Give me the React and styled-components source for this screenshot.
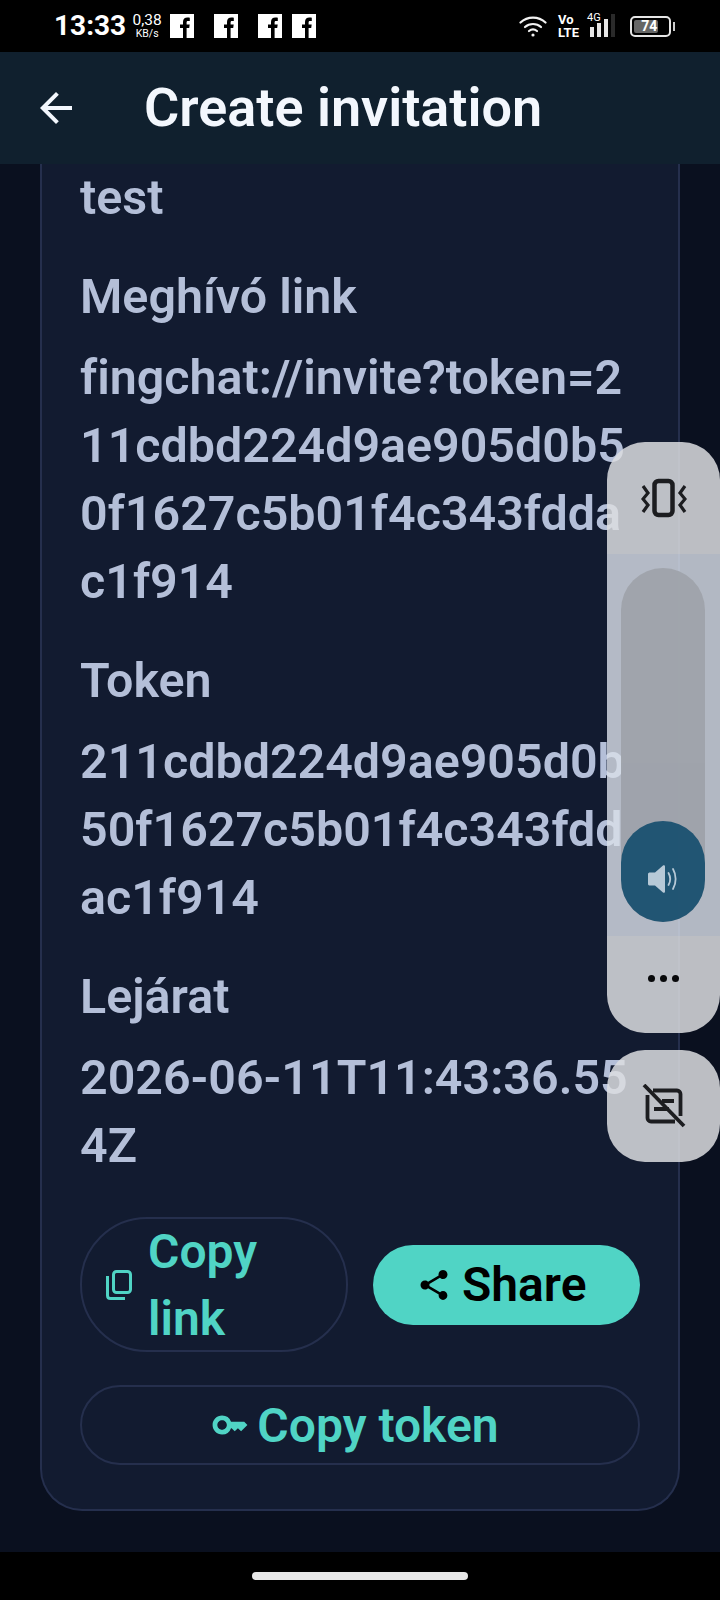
import React from "react";
import styled, { createGlobalStyle } from "styled-components";
import { MdArrowBack, MdShare, MdOutlineKey } from "react-icons/md";

const GlobalStyle = createGlobalStyle`
  html, body {
    margin: 0;
    padding: 0;
    background: #000;
  }
  * {
    box-sizing: border-box;
  }
`;

const Screen = styled.div`
  position: relative;
  width: 720px;
  height: 1600px;
  overflow: hidden;
  display: flex;
  flex-direction: column;
  background: #0a101f;
  font-family: Roboto, "Liberation Sans", sans-serif;
  font-variant-ligatures: none;
`;

const StatusBar = styled.div`
  height: 52px;
  flex: none;
  background: #000;
  color: #fff;
  display: flex;
  align-items: center;
  justify-content: space-between;
  padding: 0 49px 0 54px;
`;

const StatusGroup = styled.div`
  display: flex;
  align-items: center;
`;

const Clock = styled.span`
  font-size: 28px;
  font-weight: 700;
  line-height: 52px;
`;

const Speed = styled.div`
  margin-left: 5px;
  width: 32px;
  display: flex;
  flex-direction: column;
  align-items: center;
  font-size: 15.5px;
  line-height: 15px;
  & > small {
    font-size: 10.5px;
    line-height: 12px;
  }
`;

const FbIcon = styled.svg`
  width: 24px;
  height: 24px;
  margin-left: ${(props) => props.$gap}px;
`;

const Volte = styled.div`
  margin-left: 11px;
  display: flex;
  flex-direction: column;
  align-items: flex-start;
  font-size: 13px;
  font-weight: 700;
  line-height: 13px;
`;

const Signal = styled.div`
  position: relative;
  margin-left: 9px;
  width: 28px;
  height: 24px;
  & > span {
    position: absolute;
    left: -1px;
    top: -2px;
    font-size: 11px;
    line-height: 12px;
  }
`;

const Battery = styled.div`
  position: relative;
  margin-left: 14px;
  width: 41px;
  height: 21px;
  border: 2px solid #e6e6e6;
  border-radius: 5px;
  padding: 2px;
  &::after {
    content: "";
    position: absolute;
    right: -6px;
    top: 4px;
    width: 2.5px;
    height: 9px;
    background: #ccc;
  }
`;

const BatteryFill = styled.div`
  height: 100%;
  border-radius: 2px;
  background: #666;
  color: #fff;
  font-size: 14px;
  font-weight: 700;
  line-height: 13px;
  text-align: right;
  padding-right: 1px;
`;

const AppBar = styled.header`
  height: 112px;
  flex: none;
  display: flex;
  align-items: center;
  background: #10202e;
  color: #f3f7fd;
  padding-left: 32px;
  & > svg {
    flex: none;
  }
`;

const Title = styled.h1`
  margin: 0 0 0 64px;
  font-size: 54px;
  font-weight: 600;
  line-height: 60px;
  white-space: nowrap;
`;

const Content = styled.main`
  flex: 1;
  min-height: 0;
  padding: 0 40px 41px;
  display: flex;
`;

const Card = styled.section`
  width: 100%;
  background: #121b30;
  border: 2px solid #252f4d;
  border-top: 0;
  border-radius: 0 0 42px 42px;
  padding: 0 38px 46px;
  display: flex;
  flex-direction: column;
`;

const Field = styled.div`
  margin-bottom: 37px;
  color: #b4bfd8;
  font-weight: 600;
  font-size: 48.4px;
  &:last-of-type {
    margin-bottom: 34px;
  }
`;

const Label = styled.div`
  line-height: 56px;
  margin-bottom: 19px;
`;

const Value = styled.div`
  line-height: 68px;
  width: 560px;
  word-break: break-all;
`;

const ButtonRow = styled.div`
  display: grid;
  grid-template-columns: 1fr 1fr;
  gap: 25px;
  align-items: center;
  margin-bottom: 33px;
`;

const Button = styled.button`
  display: flex;
  align-items: center;
  justify-content: ${(props) => (props.$start ? "flex-start" : "center")};
  gap: ${(props) => props.$gap || 8}px;
  width: 100%;
  min-height: 80px;
  padding: 0 34px 0 24px;
  border-radius: 67px;
  font-family: inherit;
  font-size: 48px;
  font-weight: 600;
  line-height: 67px;
  text-align: left;
  color: ${(props) => (props.$filled ? "#000" : "#50d4c5")};
  background: ${(props) => (props.$filled ? "#50d4c5" : "transparent")};
  border: ${(props) => (props.$filled ? "0" : "2px solid #252f4d")};
  & > svg {
    flex: none;
  }
`;

const WrapLabel = styled.span`
  flex: 1;
  min-width: 0;
  margin: -1.5px 0;
`;

const VolumePanel = styled.aside`
  position: absolute;
  left: 607px;
  top: 442px;
  width: 113px;
  border-radius: 38px;
  overflow: hidden;
  display: flex;
  flex-direction: column;
`;

const PanelButton = styled.div`
  height: ${(props) => props.$height}px;
  padding-bottom: ${(props) => props.$lift || 0}px;
  display: flex;
  align-items: center;
  justify-content: center;
  background: rgba(220, 221, 224, 0.85);
  color: #1c1d20;
`;

const SliderZone = styled.div`
  position: relative;
  height: 382px;
  padding: 14px 1px 0 0;
  display: flex;
  justify-content: center;
  background: rgba(216, 222, 232, 0.82);
`;

const SliderTrack = styled.div`
  width: 84px;
  height: 354px;
  border-radius: 42px;
  background: #9fa3ab;
  opacity: 0.96;
  display: flex;
  align-items: flex-end;
`;

const SliderThumb = styled.div`
  width: 84px;
  height: 101px;
  border-radius: 42px;
  background: #1c5170;
  display: flex;
  align-items: center;
  justify-content: center;
  padding-top: 15px;
`;

const Dots = styled.div`
  display: flex;
  gap: 5px;
  & > i {
    width: 7px;
    height: 7px;
    border-radius: 50%;
    background: #08090b;
  }
`;

const CaptionButton = styled.aside`
  position: absolute;
  left: 607px;
  top: 1050px;
  width: 113px;
  height: 112px;
  border-radius: 38px;
  display: flex;
  align-items: center;
  justify-content: center;
  background: rgba(220, 221, 224, 0.85);
  color: #1c1d20;
`;

const NavBar = styled.footer`
  height: 48px;
  flex: none;
  background: #000;
  display: flex;
  justify-content: center;
  padding-top: 20px;
`;

const HomePill = styled.div`
  width: 216px;
  height: 8px;
  border-radius: 4px;
  background: #e8e8e8;
`;

const Facebook = ({ gap }) => (
  <FbIcon $gap={gap} viewBox="0 0 24 24">
    <rect width="24" height="24" fill="#fff" />
    <path
      d="M13 24V14H10V10.5H13V8C13 5 14.8 3.6 17.4 3.6C18.6 3.6 19.4 3.7 19.8 3.8V7H18C16.8 7 16.6 7.6 16.6 8.5V10.5H19.7L19.2 14H16.6V24Z"
      fill="#000"
    />
  </FbIcon>
);

const Wifi = () => (
  <svg width="28" height="22" viewBox="0 0 28 22" fill="none" stroke="#f2f2f2" strokeWidth="2.2" strokeLinecap="round">
    <path d="M1.5 7.5C8.5 1 19.5 1 26.5 7.5" />
    <path d="M6 12C10.5 8 17.5 8 22 12" />
    <path d="M10 16C12.5 14 15.5 14 18 16" />
    <circle cx="14" cy="20" r="1.6" fill="#f2f2f2" stroke="none" />
  </svg>
);

const Bars = () => (
  <svg width="28" height="24" viewBox="0 0 28 24" style={{ position: "absolute", left: 2, top: 0 }}>
    <rect x="0" y="13" width="4" height="10" fill="#e6e6e6" />
    <rect x="7" y="9" width="4" height="14" fill="#e6e6e6" />
    <rect x="14" y="5" width="4" height="18" fill="#e6e6e6" />
    <rect x="21" y="0" width="4" height="23" fill="#2a2a2a" />
  </svg>
);

const Speaker = () => (
  <svg width="32" height="30" viewBox="0 0 32 30" fill="none">
    <path d="M1 10C1 9 2 8.500 3 8.500H8L16 1.500C17 0.800 18 1.500 18 2.500V27.500C18 28.500 17 29.200 16 28.500L8 21.500H3C2 21.500 1 21 1 20Z" fill="#b8cad8" />
    <path d="M21.500 9C23.500 12.500 23.500 17.500 21.500 21" stroke="#b8cad8" strokeWidth="1.800" strokeLinecap="round" />
    <path d="M26 5C29.500 11 29.500 19 26 25" stroke="#b8cad8" strokeWidth="1.800" strokeLinecap="round" />
  </svg>
);

const VibratePhone = () => (
  <svg width="46" height="40" viewBox="0 0 46 40" fill="none" stroke="#1c1d20">
    <rect x="13.500" y="3" width="18" height="34" rx="4" strokeWidth="4.500" />
    <path d="M2 8L7 15L2 21L7 27L2 34" strokeWidth="3.200" />
    <path d="M44 8L39 15L44 21L39 27L44 34" strokeWidth="3.200" />
  </svg>
);

const CaptionsOff = () => (
  <svg width="44" height="44" viewBox="0 0 44 44" fill="none" stroke="#1c1d20" strokeWidth="3.800">
    <path d="M11 6.500H35C37 6.500 38.500 8 38.500 10V32M33 37.500H9C7 37.500 5.500 36 5.500 34V11" />
    <path d="M20 17H32M12 25H27" />
    <path d="M2 1L42 42" />
  </svg>
);

const CopyIcon = () => (
  <svg width="26" height="30" viewBox="0 0 26 30" fill="none" stroke="#50d4c5" strokeWidth="3">
    <rect x="7.500" y="1.500" width="17" height="21" rx="3" />
    <path d="M1.500 6V25.500C1.500 27.500 2.500 28.500 4.500 28.500H19" />
  </svg>
);

const fields = [
  { value: "test" },
  { label: "Meghívó link", value: "fingchat://invite?token=211cdbd224d9ae905d0b50f1627c5b01f4c343fddac1f914" },
  { label: "Token", value: "211cdbd224d9ae905d0b50f1627c5b01f4c343fddac1f914" },
  { label: "Lejárat", value: "2026-06-11T11:43:36.554Z" },
];

const App = () => {
  return (
    <Screen>
      <GlobalStyle />
      <StatusBar>
        <StatusGroup>
          <Clock>13:33</Clock>
          <Speed>
            0,38
            <small>KB/s</small>
          </Speed>
          <Facebook gap={7} />
          <Facebook gap={20} />
          <Facebook gap={20} />
          <Facebook gap={10} />
        </StatusGroup>
        <StatusGroup>
          <Wifi />
          <Volte>
            <span>Vo</span>
            <span>LTE</span>
          </Volte>
          <Signal>
            <span>4G</span>
            <Bars />
          </Signal>
          <Battery>
            <BatteryFill style={{ width: "74%" }}>74</BatteryFill>
          </Battery>
        </StatusGroup>
      </StatusBar>

      <AppBar>
        <MdArrowBack size={48} />
        <Title>Create invitation</Title>
      </AppBar>

      <Content>
        <Card>
          {fields.map((f) => (
            <Field key={f.value}>
              {f.label && <Label>{f.label}</Label>}
              <Value>{f.value}</Value>
            </Field>
          ))}
          <ButtonRow>
            <Button $start $gap={16}>
              <CopyIcon />
              <WrapLabel>Copy link</WrapLabel>
            </Button>
            <Button $filled $gap={10}>
              <MdShare size={36} />
              Share
            </Button>
          </ButtonRow>
          <Button $gap={8}>
            <MdOutlineKey size={38} />
            Copy token
          </Button>
        </Card>
      </Content>

      <NavBar>
        <HomePill />
      </NavBar>

      <VolumePanel>
        <PanelButton $height={112}>
          <VibratePhone />
        </PanelButton>
        <SliderZone>
          <SliderTrack>
            <SliderThumb>
              <Speaker />
            </SliderThumb>
          </SliderTrack>
        </SliderZone>
        <PanelButton $height={97} $lift={12}>
          <Dots>
            <i />
            <i />
            <i />
          </Dots>
        </PanelButton>
      </VolumePanel>

      <CaptionButton>
        <CaptionsOff />
      </CaptionButton>
    </Screen>
  );
};

export default App;
